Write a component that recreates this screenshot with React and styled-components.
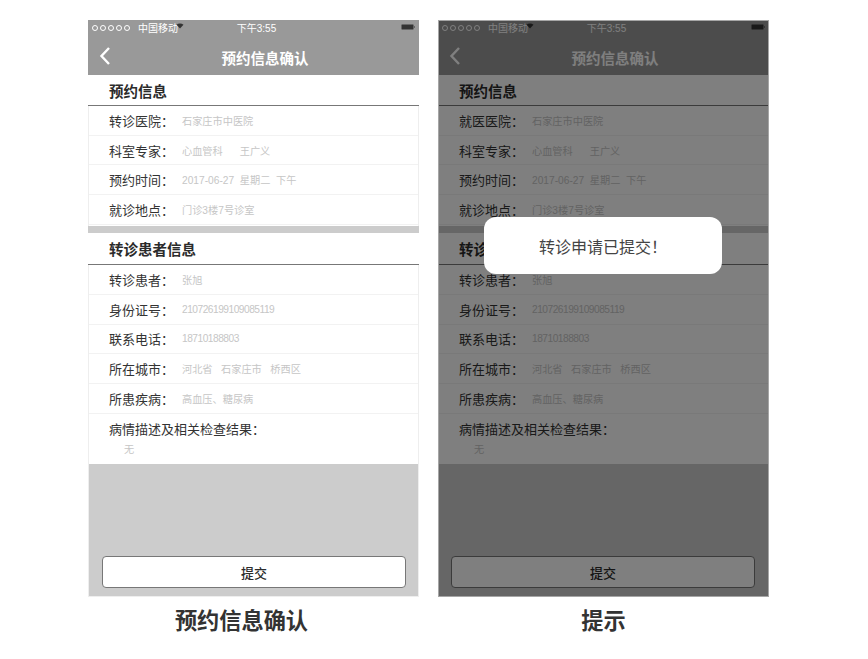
import styled, { createGlobalStyle } from 'styled-components'

const GlobalStyle = createGlobalStyle`
  html, body {
    margin: 0;
    padding: 0;
    background: #ffffff;
  }
  body {
    font-family: "Liberation Sans", "Noto Sans CJK SC", sans-serif;
  }
`

const Page = styled.div`
  display: flex;
  gap: 19px;
  width: 868px;
  height: 659px;
  box-sizing: border-box;
  padding: 20px 0 0 88px;
`

const Column = styled.div`
  display: flex;
  flex-direction: column;
  align-items: center;
  width: 331px;
`

const Phone = styled.div`
  position: relative;
  display: flex;
  flex-direction: column;
  width: 331px;
  height: 577px;
  background: #cccccc;
  overflow: hidden;
`

const TopBar = styled.div`
  background: #999999;
  color: #ffffff;
  height: 55px;
  flex: none;
`

const StatusBar = styled.div`
  display: grid;
  grid-template-columns: 1fr auto 1fr;
  align-items: center;
  height: 15px;
  padding: 1px 4px 0 4px;
  font-size: 10px;
  line-height: 15px;
`

const StatusLeft = styled.div`
  display: flex;
  align-items: center;
`

const Dots = styled.div`
  display: flex;
  gap: 2px;
  margin-right: 8px;
`

const Dot = styled.span`
  width: 6px;
  height: 6px;
  box-sizing: border-box;
  margin-top: -2px;
  border: 1px solid #ffffff;
  border-radius: 50%;
`

const Clock = styled.div`
  padding-left: 6px;
  margin-top: -1px;
`

const StatusRight = styled.div`
  display: flex;
  justify-content: flex-end;
  margin-top: -3px;
`

const NavBar = styled.div`
  position: relative;
  display: flex;
  align-items: center;
  justify-content: center;
  height: 38px;
  padding: 2px 0 0 23px;
  font-size: 14.5px;
  font-weight: 700;
`

const BackIcon = styled.svg`
  position: absolute;
  left: 11px;
  top: 10px;
`

const Content = styled.div`
  display: flex;
  flex-direction: column;
  background: #ffffff;
  border-left: 1px solid #eeeeee;
  border-right: 1px solid #eeeeee;
`

const SectionTitle = styled.div`
  display: flex;
  align-items: center;
  box-sizing: border-box;
  height: ${props => props.$height}px;
  margin: 0 -1px;
  padding-left: 21px;
  border-bottom: 1px solid #777777;
  font-size: 14.5px;
  font-weight: 700;
  color: #2b2b2b;
  background: #ffffff;
`

const RowGroup = styled.div`
  display: flex;
  flex-direction: column;
  padding-bottom: ${props => props.$extra || 0}px;
`

const Row = styled.div`
  display: flex;
  align-items: center;
  box-sizing: border-box;
  height: ${props => props.$height}px;
  padding-left: 20px;
  border-bottom: 1px solid #f2f2f2;
  font-size: 13px;
  color: #333333;
`

const Label = styled.span`
  width: 73px;
  flex: none;
`

const Value = styled.span`
  font-size: 10.2px;
  letter-spacing: ${props => (props.$digits ? '-0.5px' : '0')};
  color: #c6c6c6;
  white-space: pre;
`

const Band = styled.div`
  height: 7px;
  margin: 0 -1px;
  background: #cccccc;
`

const Description = styled.div`
  display: flex;
  flex-direction: column;
  box-sizing: border-box;
  height: 50px;
  padding: 7px 0 0 20px;
  font-size: 13px;
  line-height: 17px;
  color: #333333;
`

const Empty = styled.span`
  padding: 5px 0 0 15px;
  font-size: 10.2px;
  line-height: 14px;
  color: #c6c6c6;
`

const Footer = styled.div`
  flex: 1;
  display: flex;
  align-items: flex-end;
  border: 1px solid #eeeeee;
  border-top: none;
  padding: 0 ${props => (props.$nudge ? 13 : 12)}px 8px ${props => (props.$nudge ? 12 : 13)}px;
`

const SubmitButton = styled.button`
  width: 100%;
  height: 32px;
  padding: 0;
  background: #ffffff;
  border: 1px solid #777777;
  border-radius: 4px;
  font-family: inherit;
  font-size: 13px;
  font-weight: 500;
  color: #2b2b2b;
`

const Overlay = styled.div`
  position: absolute;
  inset: 0;
  background: rgba(0, 0, 0, 0.5);
  box-shadow: inset 0 0 0 1px #a6a6a6;
`

const Dialog = styled.div`
  position: absolute;
  left: 46px;
  top: 197px;
  display: flex;
  align-items: center;
  justify-content: center;
  width: 238px;
  height: 57px;
  background: #ffffff;
  border-radius: 12px;
  font-size: 16px;
  color: #444444;
`

const Caption = styled.div`
  margin-top: 11px;
  padding-right: ${props => props.$offset}px;
  font-size: 22.2px;
  line-height: 28px;
  font-weight: 700;
  color: #333333;
`

const bookingRows = (hospitalLabel) => [
  [hospitalLabel, '石家庄市中医院'],
  ['科室专家：', '心血管科      王广义'],
  ['预约时间：', '2017-06-27  星期二  下午'],
  ['就诊地点：', '门诊3楼7号诊室'],
]

const patientRows = [
  ['转诊患者：', '张旭'],
  ['身份证号：', '210726199109085119', true],
  ['联系电话：', '18710188803', true],
  ['所在城市：', '河北省   石家庄市   桥西区'],
  ['所患疾病：', '高血压、糖尿病'],
]

const WifiIcon = () => (
  <svg width="8" height="6" viewBox="0 0 8 6" style={{ marginLeft: -2, marginTop: -5 }}>
    <path d="M0.5 1.8C2.5 0.2 5.5 0.2 7.5 1.8L4 5.5Z" fill="#333333" />
  </svg>
)

const BatteryIcon = () => (
  <svg width="14" height="6" viewBox="0 0 14 6">
    <rect x="0.5" y="0.5" width="12" height="5" rx="1" fill="#333333" stroke="#666666" />
    <rect x="13" y="2" width="1" height="2" fill="#666666" />
  </svg>
)

const InfoRows = ({ rows, height, extra }) => (
  <RowGroup $extra={extra}>
    {rows.map(([label, value, digits]) => (
      <Row key={label} $height={height}>
        <Label>{label}</Label>
        <Value $digits={digits}>{value}</Value>
      </Row>
    ))}
  </RowGroup>
)

const Screen = ({ hospitalLabel, dialog }) => (
  <Phone>
    <TopBar>
      <StatusBar>
        <StatusLeft>
          <Dots>
            {[0, 1, 2, 3, 4].map(i => <Dot key={i} />)}
          </Dots>
          中国移动
          <WifiIcon />
        </StatusLeft>
        <Clock>下午3:55</Clock>
        <StatusRight>
          <BatteryIcon />
        </StatusRight>
      </StatusBar>
      <NavBar>
        <BackIcon width="12" height="20" viewBox="0 0 12 20" fill="none">
          <path d="M10 2L2.5 10L10 18" stroke="#ffffff" strokeWidth="2.4" />
        </BackIcon>
        预约信息确认
      </NavBar>
    </TopBar>
    <Content>
      <SectionTitle $height={31}>预约信息</SectionTitle>
      <InfoRows rows={bookingRows(hospitalLabel)} height={29.7} extra={1} />
      <Band />
      <SectionTitle $height={32}>转诊患者信息</SectionTitle>
      <InfoRows rows={patientRows} height={29.9} />
      <Description>
        病情描述及相关检查结果：
        <Empty>无</Empty>
      </Description>
    </Content>
    <Footer $nudge={!!dialog}>
      <SubmitButton>提交</SubmitButton>
    </Footer>
    {dialog && (
      <Overlay>
        <Dialog>{dialog}</Dialog>
      </Overlay>
    )}
  </Phone>
)

export default function App() {
  return (
    <Page>
      <GlobalStyle />
      <Column>
        <Screen hospitalLabel="转诊医院：" />
        <Caption $offset={24}>预约信息确认</Caption>
      </Column>
      <Column>
        <Screen hospitalLabel="就医医院：" dialog="转诊申请已提交！" />
        <Caption $offset={0}>提示</Caption>
      </Column>
    </Page>
  )
}
